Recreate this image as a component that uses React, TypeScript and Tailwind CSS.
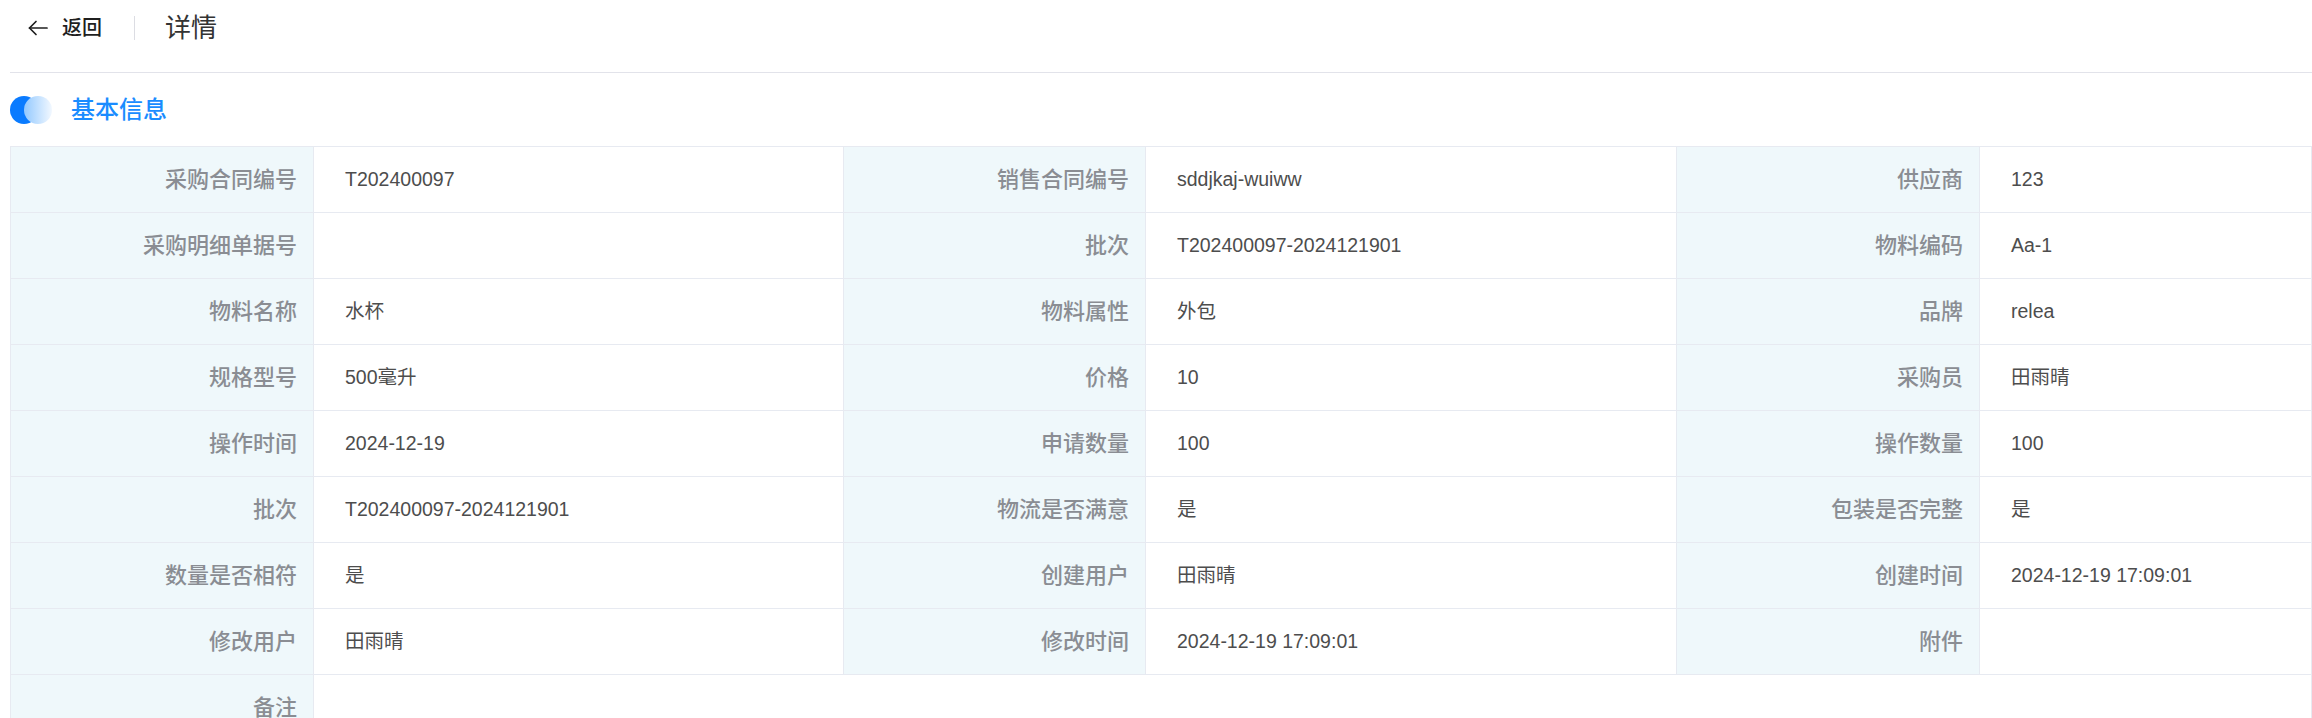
import React from "react";

type Item = { label: string; value: string };

const rows: Item[][] = [
  [
    { label: "采购合同编号", value: "T202400097" },
    { label: "销售合同编号", value: "sddjkaj-wuiww" },
    { label: "供应商", value: "123" },
  ],
  [
    { label: "采购明细单据号", value: "" },
    { label: "批次", value: "T202400097-2024121901" },
    { label: "物料编码", value: "Aa-1" },
  ],
  [
    { label: "物料名称", value: "水杯" },
    { label: "物料属性", value: "外包" },
    { label: "品牌", value: "relea" },
  ],
  [
    { label: "规格型号", value: "500毫升" },
    { label: "价格", value: "10" },
    { label: "采购员", value: "田雨晴" },
  ],
  [
    { label: "操作时间", value: "2024-12-19" },
    { label: "申请数量", value: "100" },
    { label: "操作数量", value: "100" },
  ],
  [
    { label: "批次", value: "T202400097-2024121901" },
    { label: "物流是否满意", value: "是" },
    { label: "包装是否完整", value: "是" },
  ],
  [
    { label: "数量是否相符", value: "是" },
    { label: "创建用户", value: "田雨晴" },
    { label: "创建时间", value: "2024-12-19 17:09:01" },
  ],
  [
    { label: "修改用户", value: "田雨晴" },
    { label: "修改时间", value: "2024-12-19 17:09:01" },
    { label: "附件", value: "" },
  ],
];

function Label({ children }: { children: React.ReactNode }) {
  return (
    <div className="flex h-[66px] items-center justify-end border-r border-b border-[#e7eaf1] bg-[#eff8fb] pr-[16px] text-[22px] font-medium text-[#8a8d93]">
      {children}
    </div>
  );
}

function Value({ children, span }: { children: React.ReactNode; span?: boolean }) {
  return (
    <div
      className={
        "flex h-[66px] items-center border-r border-b border-[#e7eaf1] bg-white pl-[31px] text-[19.5px] text-[#4d4d4d]" +
        (span ? " col-span-5" : "")
      }
    >
      {children}
    </div>
  );
}

export default function App() {
  return (
    <div className="min-h-[718px] w-full overflow-hidden bg-white font-['Liberation_Sans','Noto_Sans_CJK_SC',sans-serif]">
      <div className="pl-[10px]">
        <div className="h-[73px] border-b border-[#e2e3ea]">
          <div className="flex h-[56px] items-center pl-[17px]">
            <svg width="22" height="22" viewBox="0 0 22 22" fill="none" stroke="#1f1f1f" strokeWidth="1.7" strokeLinecap="round" strokeLinejoin="round">
              <path d="M20 11H2.5" />
              <path d="M9 4.5L2.5 11L9 17.5" />
            </svg>
            <span className="ml-[13px] text-[20px] font-medium text-[#1f1f1f]">返回</span>
            <div className="ml-[32px] h-[24px] w-px bg-[#dcdde3]" />
            <span className="ml-[30px] text-[26px] text-[#333333]">详情</span>
          </div>
        </div>
        <div className="flex h-[73px] items-center">
          <svg width="42" height="28" viewBox="0 0 42 28">
            <defs>
              <linearGradient id="g" x1="0" y1="0" x2="1" y2="0">
                <stop offset="0" stopColor="#93c9ff" />
                <stop offset="1" stopColor="#f2f8ff" />
              </linearGradient>
            </defs>
            <circle cx="14" cy="14" r="14" fill="#0a7bff" />
            <circle cx="28" cy="14" r="14" fill="url(#g)" />
          </svg>
          <span className="ml-[19px] text-[24px] font-medium text-[#1a8cff]">基本信息</span>
        </div>
        <div className="grid grid-cols-[303px_530px_302px_531px_303px_1fr] border-t border-l border-[#e7eaf1]">
          {rows.map((row, i) => (
            <React.Fragment key={i}>
              {row.map((it, j) => (
                <React.Fragment key={j}>
                  <Label>{it.label}</Label>
                  <Value>{it.value}</Value>
                </React.Fragment>
              ))}
            </React.Fragment>
          ))}
          <Label>备注</Label>
          <Value span>{""}</Value>
        </div>
      </div>
    </div>
  );
}
